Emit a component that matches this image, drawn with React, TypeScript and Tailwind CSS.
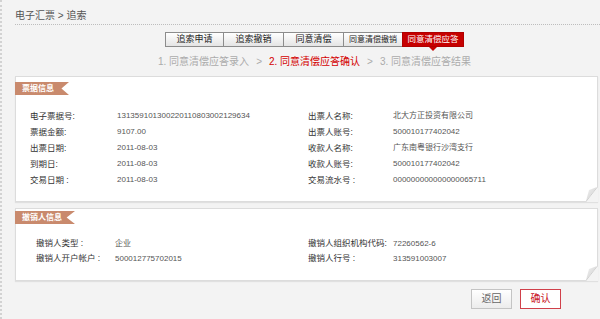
import React from "react";

const tabs = [
  { t: "追索申请", w: "w-[59px]", fs: "text-[9px]" },
  { t: "追索撤销", w: "w-[61px]", fs: "text-[9px]" },
  { t: "同意清偿", w: "w-[61px]", fs: "text-[9px]" },
  { t: "同意清偿撤销", w: "w-[60px]", fs: "text-[8px]" },
  { t: "同意清偿应答", w: "w-[62px]", fs: "text-[8.5px]", active: true },
];

const rows1: [string, string, string, string][] = [
  ["电子票据号:", "131359101300220110803002129634", "出票人名称:", "北大方正投资有限公司"],
  ["票据金额:", "9107.00", "出票人账号:", "500010177402042"],
  ["出票日期:", "2011-08-03", "收款人名称:", "广东南粤银行沙湾支行"],
  ["到期日:", "2011-08-03", "收款人账号:", "500010177402042"],
  ["交易日期 :", "2011-08-03", "交易流水号 :", "000000000000000065711"],
];

const rows2: [string, string, string, string][] = [
  ["撤销人类型 :", "企业", "撤销人组织机构代码:", "72260562-6"],
  ["撤销人开户帐户 :", "500012775702015", "撤销人行号 :", "313591003007"],
];

function Ribbon({ text, w }: { text: string; w: string }) {
  return (
    <div
      className={`${w} h-[13px] -ml-px bg-[#c98a6d] text-white font-bold text-[8px] leading-[13px] pl-[7px] [clip-path:polygon(0_0,100%_0,86%_50%,100%_100%,0_100%)]`}
    >
      {text}
    </div>
  );
}

function Fold() {
  return (
    <svg
      className="absolute right-[-1px] bottom-[-1px]"
      width="12"
      height="15"
      viewBox="0 0 12 15"
    >
      <defs>
        <linearGradient id="fg" x1="0" y1="0" x2="1" y2="1">
          <stop offset="0" stopColor="#f4f4f4" />
          <stop offset="1" stopColor="#c9c9c9" />
        </linearGradient>
      </defs>
      <polygon points="12,0 12,15 0,15" fill="#f3f3f3" />
      <polygon points="0,14 11,0 3,3" fill="url(#fg)" />
      <line x1="0" y1="14.5" x2="11" y2="0.5" stroke="#cfcfcf" strokeWidth="1" />
    </svg>
  );
}

export default function App() {
  return (
    <div className="w-[600px] h-[319px] overflow-hidden bg-[#f3f3f3] border-l-2 border-dotted border-[#d2d2d2] pl-[13px] font-['Liberation_Sans','Noto_Sans_CJK_SC',sans-serif]">
      <div className="h-[25px] pt-[10px] border-b border-dotted border-[#bdbdbd] text-[10px] leading-[12px] text-[#555]">
        电子汇票 &gt; 追索
      </div>

      <div className="mt-[7px] ml-[150px] flex h-[15px]">
        {tabs.map((tb, i) => (
          <div
            key={tb.t}
            className={`${tb.w} ${tb.fs} ${i > 0 ? "-ml-px" : ""} relative h-[15px] border flex items-center justify-center leading-[13px] ${
              tb.active
                ? "bg-[#c60000] border-[#b00000] text-white"
                : "bg-linear-to-b from-white to-[#e4e4e4] border-[#8c8c8c] text-[#222]"
            }`}
          >
            {tb.t}
            {tb.active && (
              <span className="absolute left-1/2 -translate-x-1/2 top-[14px] w-0 h-0 border-l-[4px] border-r-[4px] border-t-[4px] border-l-transparent border-r-transparent border-t-[#c60000]" />
            )}
          </div>
        ))}
      </div>

      <div className="mt-[8px] ml-[143px] flex items-center text-[10px] leading-[14px] text-[#ababab]">
        <span>1. 同意清偿应答录入</span>
        <span className="mx-[7px]">&gt;</span>
        <span className="text-[#d40000]">2. 同意清偿应答确认</span>
        <span className="mx-[7px]">&gt;</span>
        <span>3. 同意清偿应答结果</span>
      </div>

      <div className="relative mt-[7px] w-[583px] bg-white border border-[#dcdcdc] pt-[5px] pb-[13px] shadow-[0_1px_1px_rgba(0,0,0,0.08)]">
        <Ribbon text="票据信息" w="w-[54px]" />
        <div className="mt-[13px] pl-[14px] grid grid-cols-[87px_191px_85px_1fr]">
          {rows1.map((r) => (
            <React.Fragment key={r[0]}>
              <div className="text-[8.5px] leading-[16px] text-[#333]">{r[0]}</div>
              <div className="text-[8px] leading-[16px] text-[#555]">{r[1]}</div>
              <div className="text-[8.5px] leading-[16px] text-[#333]">{r[2]}</div>
              <div className="text-[8px] leading-[16px] text-[#555]">{r[3]}</div>
            </React.Fragment>
          ))}
        </div>
        <Fold />
      </div>

      <div className="relative mt-[6px] w-[583px] bg-white border border-[#dcdcdc] pt-[2px] pb-[14px] shadow-[0_1px_1px_rgba(0,0,0,0.08)]">
        <Ribbon text="撤销人信息" w="w-[60px]" />
        <div className="mt-[12px] pl-[20px] grid grid-cols-[79px_193px_85px_1fr]">
          {rows2.map((r) => (
            <React.Fragment key={r[0]}>
              <div className="text-[8.5px] leading-[15px] text-[#333]">{r[0]}</div>
              <div className="text-[8px] leading-[15px] text-[#555]">{r[1]}</div>
              <div className="text-[8.5px] leading-[15px] text-[#333]">{r[2]}</div>
              <div className="text-[8px] leading-[15px] text-[#555]">{r[3]}</div>
            </React.Fragment>
          ))}
        </div>
        <Fold />
      </div>

      <div className="mt-[8px] pr-[39px] flex justify-end gap-[8px]">
        <button className="w-[41px] h-[20px] border border-[#c4c4c4] bg-linear-to-b from-white to-[#ececec] text-[10px] leading-[18px] text-[#666]">
          返回
        </button>
        <button className="w-[41px] h-[20px] border border-[#d0404a] bg-white text-[10px] leading-[18px] text-[#c8101c]">
          确认
        </button>
      </div>
    </div>
  );
}
